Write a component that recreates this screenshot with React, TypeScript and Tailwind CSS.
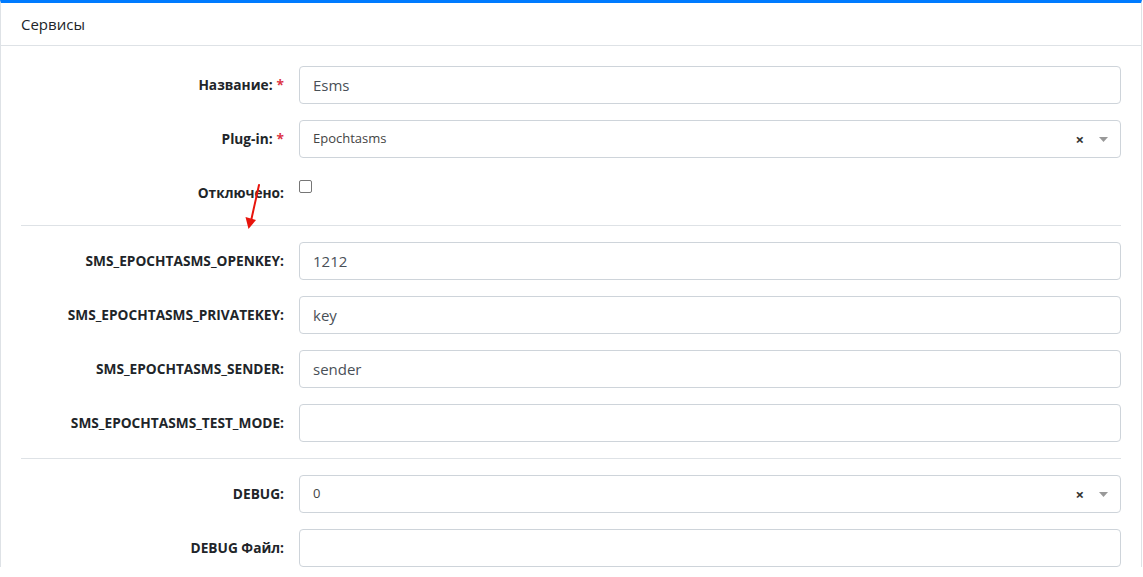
import React from "react";

const font = { fontFamily: '"Open Sans", "Noto Sans", "Liberation Sans", sans-serif' };

function Label({ text, required }: { text: string; required?: boolean }) {
  return (
    <label className="w-[263px] shrink-0 text-right text-[13.7px] font-bold text-[#212529]">
      {text}:{required && <span className="ml-[4px] text-[#dc3545]">*</span>}
    </label>
  );
}

function TextRow({ label, value, required }: { label: string; value?: string; required?: boolean }) {
  return (
    <div className="mb-[16px] flex items-center">
      <Label text={label} required={required} />
      <div className="ml-[15px] flex h-[38px] flex-1 items-center rounded-[4px] border border-[#ced4da] px-[13px] text-[15px] text-[#495057]">
        {value}
      </div>
    </div>
  );
}

function SelectRow({ label, value, required }: { label: string; value: string; required?: boolean }) {
  return (
    <div className="mb-[16px] flex items-center">
      <Label text={label} required={required} />
      <div className="ml-[15px] flex h-[38px] flex-1 items-center rounded-[4px] border border-[#ced4da] pl-[13px] pr-[12px] text-[13px] text-[#444]">
        <span className="flex-1">{value}</span>
        <span className="mr-[15px] text-[15px] font-bold leading-none text-[#333]">×</span>
        <svg width="9" height="5" viewBox="0 0 9 5">
          <path d="M0 0h9L4.5 5z" fill="#999" />
        </svg>
      </div>
    </div>
  );
}

export default function App() {
  return (
    <div className="h-[577px] w-[1143px] overflow-hidden bg-white" style={font}>
      <div className="relative mr-[1px] border-x border-t-[3px] border-x-[#dee2e6] border-t-[#007bff] bg-white">
        <div className="flex h-[43px] items-center border-b border-[#dee2e6] px-[20px] text-[15px] text-[#212529]">
          Сервисы
        </div>
        <div className="px-[20px] pt-[20px]">
          <TextRow label="Название" value="Esms" required />
          <SelectRow label="Plug-in" value="Epochtasms" required />
          <div className="flex h-[38px] items-center">
            <Label text="Отключено" />
            <div className="ml-[15px] flex h-full items-start pt-[6px]">
              <span className="block h-[13px] w-[13px] rounded-[2px] border border-[#767676] bg-white" />
            </div>
          </div>
          <hr className="mb-[16px] mt-[13px] border-[#dee2e6]" />
          <TextRow label="SMS_EPOCHTASMS_OPENKEY" value="1212" />
          <TextRow label="SMS_EPOCHTASMS_PRIVATEKEY" value="key" />
          <TextRow label="SMS_EPOCHTASMS_SENDER" value="sender" />
          <TextRow label="SMS_EPOCHTASMS_TEST_MODE" />
          <hr className="mb-[16px] mt-[0px] border-[#dee2e6]" />
          <SelectRow label="DEBUG" value="0" />
          <TextRow label="DEBUG Файл" />
        </div>
        <svg className="absolute left-[240px] top-[178px]" width="24" height="54" viewBox="0 0 24 54">
          <line x1="18" y1="4" x2="10" y2="40" stroke="#e8140c" strokeWidth="2" strokeLinecap="round" />
          <path d="M4.5 36 L 15 39 L 7.5 48 Z" fill="#e8140c" />
        </svg>
      </div>
    </div>
  );
}
